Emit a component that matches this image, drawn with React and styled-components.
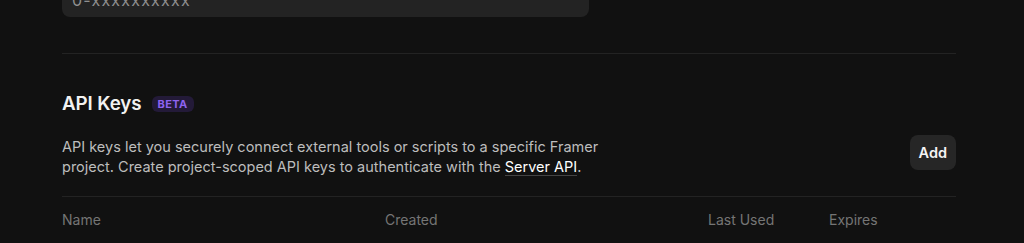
import React from 'react'
import styled, { createGlobalStyle } from 'styled-components'

const GlobalStyle = createGlobalStyle`
  html, body {
    margin: 0;
    background: #111111;
    font-family: Inter, "Noto Sans", sans-serif;
    -webkit-font-smoothing: antialiased;
  }
`

const Page = styled.div`
  width: 894px;
  margin: -17px auto 0 62px;
`

const Input = styled.div`
  width: 527px;
  height: 34px;
  box-sizing: border-box;
  padding: 0 10px;
  display: flex;
  align-items: center;
  background: #232323;
  border-radius: 8px;
  color: #8f8f8f;
  font-size: 16px;
  letter-spacing: 1.2px;
`

const Divider = styled.hr`
  margin: ${({ $top }) => $top}px 0 0;
  border: 0;
  height: 1px;
  background: #232323;
`

const TitleRow = styled.div`
  display: flex;
  align-items: center;
  gap: 10px;
  margin-top: 38px;
`

const Title = styled.h2`
  margin: 0;
  font-size: 18.8px;
  font-weight: 600;
  color: #f2f2f2;
  letter-spacing: -0.1px;
`

const Badge = styled.span`
  background: #231a38;
  color: #8d63f0;
  font-size: 11px;
  font-weight: 700;
  line-height: 12px;
  letter-spacing: 0.4px;
  padding: 2px 6px;
  border-radius: 6px;
`

const Intro = styled.div`
  display: flex;
  justify-content: space-between;
  align-items: flex-start;
  margin-top: 22px;
`

const Text = styled.p`
  margin: 0;
  width: 580px;
  font-size: 14.5px;
  line-height: 20px;
  color: #bdbdbd;
`

const Link = styled.a`
  color: #ffffff;
  text-decoration: none;
  border-bottom: 1px solid #444;
`

const Button = styled.button`
  height: 35px;
  margin-top: -2px;
  padding: 0 9px;
  border: 0;
  border-radius: 8px;
  background: #262626;
  color: #f5f5f5;
  font-family: inherit;
  font-size: 14.5px;
  font-weight: 600;
`

const Header = styled.div`
  display: grid;
  grid-template-columns: 323px 323px 121px 1fr;
  margin-top: 13px;
  color: #757575;
  font-size: 14px;
  line-height: 20px;
`

export default function App() {
  return (
    <>
      <GlobalStyle />
      <Page>
        <Input>0-xxxxxxxxxx</Input>
        <Divider $top={36} />
        <TitleRow>
          <Title>API Keys</Title>
          <Badge>BETA</Badge>
        </TitleRow>
        <Intro>
          <Text>
            API keys let you securely connect external tools or scripts to a specific Framer
            project. Create project-scoped API keys to authenticate with the <Link>Server API</Link>.
          </Text>
          <Button>Add</Button>
        </Intro>
        <Divider $top={19} />
        <Header>
          <span>Name</span>
          <span>Created</span>
          <span>Last Used</span>
          <span>Expires</span>
        </Header>
      </Page>
    </>
  )
}
